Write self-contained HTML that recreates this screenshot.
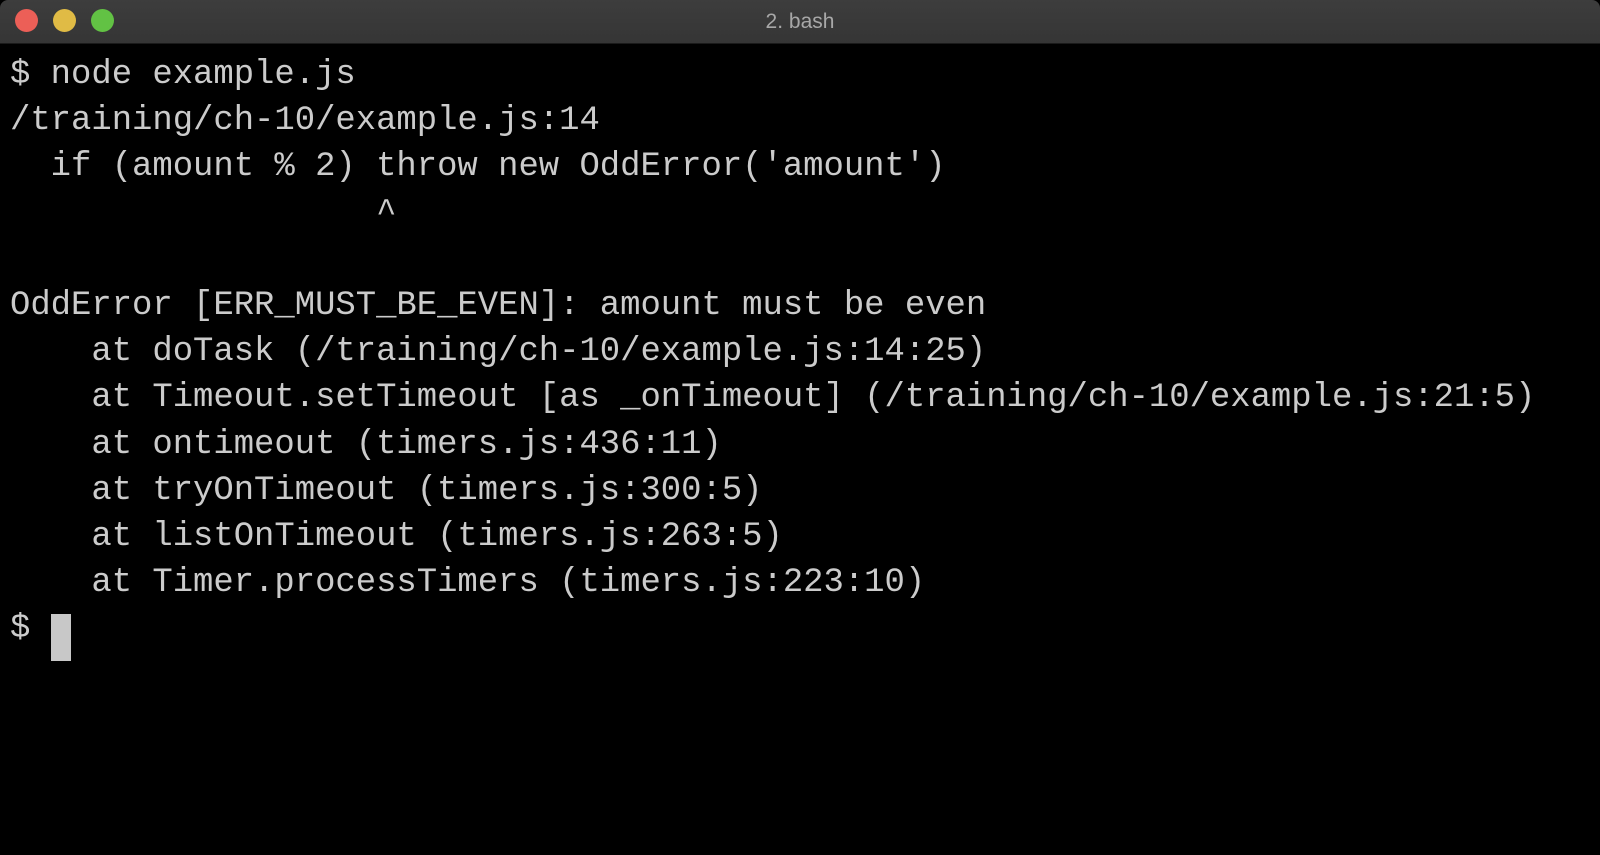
<!DOCTYPE html>
<html><head><style>
html,body{margin:0;padding:0;background:#000;width:1600px;height:855px;overflow:hidden}
.bar{position:absolute;left:0;top:0;width:1600px;height:43px;background:linear-gradient(#3d3d3d,#353535);border-bottom:1px solid #1a1a1a;border-radius:8px 8px 0 0}
.dot{position:absolute;top:9px;width:23px;height:23px;border-radius:50%}
.title{position:absolute;top:0;left:0;width:1600px;text-align:center;font:21px "Liberation Sans",sans-serif;line-height:43px;color:#a8a8a8}
pre{position:absolute;left:10px;top:52px;margin:0;font:33.9px/46.2px "Liberation Mono",monospace;color:#cbcbcb}
.cur{position:absolute;left:51px;top:614px;width:20px;height:47px;background:#c8c8c8}
</style></head><body>
<div class="bar">
<div class="dot" style="left:15px;background:#ec5f57"></div>
<div class="dot" style="left:53px;background:#e0bb45"></div>
<div class="dot" style="left:91px;background:#62c244"></div>
<div class="title">2. bash</div>
</div>
<pre>$ node example.js
/training/ch-10/example.js:14
  if (amount % 2) throw new OddError('amount')
                  ^

OddError [ERR_MUST_BE_EVEN]: amount must be even
    at doTask (/training/ch-10/example.js:14:25)
    at Timeout.setTimeout [as _onTimeout] (/training/ch-10/example.js:21:5)
    at ontimeout (timers.js:436:11)
    at tryOnTimeout (timers.js:300:5)
    at listOnTimeout (timers.js:263:5)
    at Timer.processTimers (timers.js:223:10)
$ </pre>
<div class="cur"></div>
</body></html>
